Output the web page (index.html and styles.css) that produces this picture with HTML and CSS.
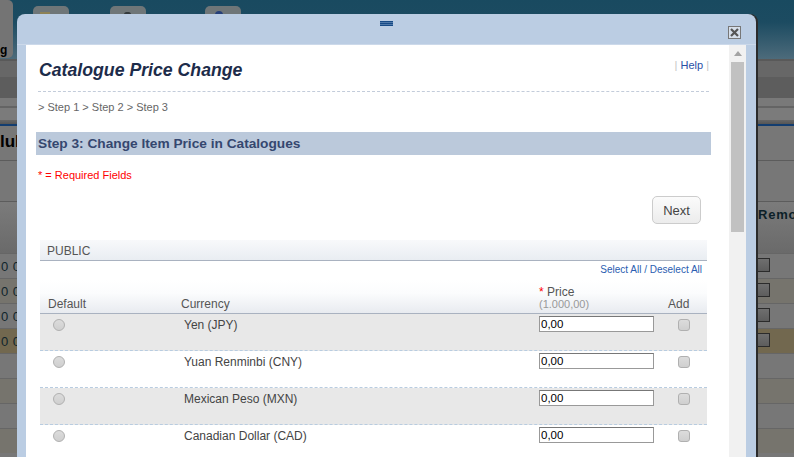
FILE: index.html
```html
<!DOCTYPE html>
<html lang="en">
<head>
<meta charset="utf-8">
<title>Catalogue Price Change</title>
<link rel="stylesheet" href="styles.css">
</head>
<body>
<div class="page">
  <div class="backdrop">
    <header class="bg-head">
      <div class="bg-side"><span>g</span></div>
      <div class="bg-tab bg-tab-a"><i></i></div>
      <div class="bg-tab bg-tab-b"><i></i></div>
      <div class="bg-tab bg-tab-c"><i></i></div>
    </header>
    <div class="bg-nav-a"></div>
    <div class="bg-nav-b"></div>
    <div class="bg-nav-c"></div>
    <div class="bg-nav-d"></div>
    <div class="bg-nav-e"></div>
    <div class="bg-title">lul</div>
    <div class="bg-blank"></div>
    <div class="bg-thead">Remo</div>
    <div class="bg-row bg-alt-a"><span>0 0</span><i></i></div>
    <div class="bg-row bg-alt-b"><span>0 0</span><i></i></div>
    <div class="bg-row bg-alt-a"><span>0 0</span><i></i></div>
    <div class="bg-row bg-hot"><span>0 0</span><i></i></div>
    <div class="bg-row bg-alt-a"></div>
    <div class="bg-row bg-alt-b"></div>
    <div class="bg-row bg-alt-a"></div>
    <div class="bg-row bg-alt-b"></div>
  </div>

  <section class="dialog">
    <div class="dialog-bar">
      <div class="grip"></div>
      <button class="close" aria-label="Close">
        <svg width="11" height="11" viewBox="0 0 11 11"><path d="M2 2l7 7M9 2l-7 7" stroke="#555" stroke-width="2.2" fill="none"/></svg>
      </button>
    </div>
    <div class="dialog-body">
      <main class="content">
        <div class="title-row">
          <h1>Catalogue Price Change</h1>
          <div class="help"><b>|</b> <a>Help</a> <b>|</b></div>
        </div>
        <div class="crumbs">&gt; Step 1 &gt; Step 2 &gt; Step 3</div>
        <h2>Step 3: Change Item Price in Catalogues</h2>
        <p class="required">* = Required Fields</p>
        <div class="actions"><button class="next">Next</button></div>
        <div class="panel">
          <div class="panel-head">PUBLIC</div>
          <div class="select-all"><a>Select All / Deselect All</a></div>
          <div class="grid grid-head">
            <div>Default</div>
            <div>Currency</div>
            <div class="price-head"><div><span class="star">*</span> Price</div><div class="hint">(1.000,00)</div></div>
            <div>Add</div>
          </div>
          <div class="grid row shaded">
            <div><input class="radio" type="radio"></div>
            <div class="cur">Yen (JPY)</div>
            <div><input class="price" type="text" value="0,00"></div>
            <div><input class="check" type="checkbox"></div>
          </div>
          <div class="grid row">
            <div><input class="radio" type="radio"></div>
            <div class="cur">Yuan Renminbi (CNY)</div>
            <div><input class="price" type="text" value="0,00"></div>
            <div><input class="check" type="checkbox"></div>
          </div>
          <div class="grid row shaded">
            <div><input class="radio" type="radio"></div>
            <div class="cur">Mexican Peso (MXN)</div>
            <div><input class="price" type="text" value="0,00"></div>
            <div><input class="check" type="checkbox"></div>
          </div>
          <div class="grid row">
            <div><input class="radio" type="radio"></div>
            <div class="cur">Canadian Dollar (CAD)</div>
            <div><input class="price" type="text" value="0,00"></div>
            <div><input class="check" type="checkbox"></div>
          </div>
        </div>
      </main>
      <aside class="scrollbar">
        <div class="arrow"></div>
        <div class="thumb"></div>
      </aside>
    </div>
  </section>
</div>
</body>
</html>
```
FILE: styles.css
```css
* { box-sizing: border-box; }
html, body { margin: 0; padding: 0; }
body { font-family: "Liberation Sans", Arial, sans-serif; background: #777; }
.page { position: relative; width: 794px; height: 457px; overflow: hidden; }

/* dimmed page behind the dialog */
.backdrop { display: flex; flex-direction: column; width: 794px; height: 457px; overflow: hidden; }
.bg-head { display: flex; height: 59px; background: linear-gradient(#194a60 0, #1c4b61 22px, #4d6b7b 59px); }
.bg-side { width: 13px; height: 58px; margin-right: 20px; background: #747474; border-radius: 0 5px 5px 0; font-weight: 700; font-size: 12px; color: #000; padding-top: 43px; line-height: 14px; }
.bg-tab { width: 36px; height: 20px; margin-top: 6px; padding-top: 6px; background: #6f7678; border-radius: 5px 5px 0 0; }
.bg-tab i { display: block; }
.bg-tab-a { margin-right: 41px; }
.bg-tab-a i { width: 10px; height: 4px; margin-left: 7px; background: #8d8256; }
.bg-tab-b { margin-right: 59px; }
.bg-tab-b i { width: 7px; height: 5px; margin-left: 14px; background: #333a3d; border-radius: 3px; }
.bg-tab-c i { width: 8px; height: 8px; margin: -1px 0 0 10px; background: #26407a; border-radius: 50%; }
.bg-nav-a { height: 18px; background: #676767; border-top: 2px solid #595959; }
.bg-nav-b { height: 21px; background: #5d5d5d; }
.bg-nav-c { height: 8px; background: #797979; }
.bg-nav-d { height: 14px; background: #7b7b7b; border-top: 2px solid #646464; }
.bg-nav-e { height: 6px; background: linear-gradient(#666 0, #555 4px, #123d70 4px); }
.bg-title { height: 34px; background: #777; font-size: 17px; font-weight: 700; color: #000; line-height: 32px; }
.bg-blank { height: 41px; background: #777; border-top: 1px solid #5c5c5c; }
.bg-thead { height: 52px; padding: 5px 0 0 758px; background: linear-gradient(#7b7b7b, #6a6a6a); border-top: 1px solid #5c5c5c; font-size: 13px; font-weight: 700; letter-spacing: .8px; line-height: 16px; color: #0c1f28; white-space: nowrap; }
.bg-row { display: flex; justify-content: space-between; align-items: center; height: 25px; padding: 0 24px 0 1px; border-top: 1px solid #666; font-size: 13px; letter-spacing: .5px; color: #10252c; }
.bg-row i { width: 14px; height: 14px; margin-top: -2px; background: linear-gradient(#6f6f6f, #5d5d5d); border: 1px solid #2b2b2b; }
.bg-alt-a { background: #777; }
.bg-alt-b { background: #76746d; }
.bg-hot { background: #72684f; }

/* dialog */
.dialog { position: absolute; left: 17px; top: 14px; width: 739px; height: 443px; display: flex; flex-direction: column; background: #bbcde3; border-radius: 8px 8px 0 0; box-shadow: 2px 0 0 #2b2b2b; }
.dialog-bar { display: flex; justify-content: space-between; height: 31px; padding: 7px 15px 0 363px; border-bottom: 1px solid rgba(255, 255, 255, .25); }
.grip { width: 13px; height: 5px; background: repeating-linear-gradient(#174a86 0, #174a86 1px, #4f78a8 1px, #4f78a8 2px); }
.close { width: 13px; height: 13px; margin-top: 5px; padding: 0; display: flex; align-items: center; justify-content: center; background: #d6dfea; border: 1px solid #777; }
.dialog-body { flex: 1; min-height: 0; display: flex; margin: 0 10px 0 9px; }
.content { width: 703px; height: 100%; overflow: hidden; background: #fff; padding: 0 18px 0 10px; }
.scrollbar { width: 17px; background: #f1f1f1; padding: 0 2px; }
.arrow { width: 0; height: 0; margin: 6px auto 0; border-left: 4px solid transparent; border-right: 4px solid transparent; border-bottom: 5px solid #a3a3a3; }
.thumb { height: 170px; margin-top: 6px; background: #c1c1c1; }

.title-row { display: flex; justify-content: space-between; height: 47px; border-bottom: 1px dashed #c3ccda; margin: 0 2px; }
h1 { margin: 14px 0 0 1px; font-size: 17.7px; line-height: 22px; font-style: italic; font-weight: 700; color: #1d2c4a; }
.help { margin-top: 14px; font-size: 11px; line-height: 13px; color: #2a4fa5; }
.help b { font-weight: 400; color: #c5c5c5; }
.crumbs { margin: 9px 2px 0; font-size: 11px; line-height: 13px; color: #666; }
h2 { margin: 18px 0 0; padding-left: 2px; height: 23px; width: 675px; background: #bbc9db; font-size: 13.7px; line-height: 24px; font-weight: 700; color: #35476f; }
.required { margin: 14px 2px 0; font-size: 11px; line-height: 13px; color: #f00; }
.actions { display: flex; justify-content: flex-end; height: 28px; margin-top: 14px; padding-right: 10px; }
.next { width: 49px; height: 28px; padding: 0; border: 1px solid #ccc; border-radius: 5px; background: linear-gradient(#fbfbfb, #ececec); font-family: inherit; font-size: 13px; color: #444; }
.panel { width: 667px; margin: 16px 0 0 4px; }
.panel-head { height: 21px; padding-left: 7px; background: linear-gradient(#f8f9fb, #e9edf2); border-bottom: 1px solid #a9b2c0; font-size: 12px; line-height: 22px; color: #555; }
.select-all { height: 19px; padding-right: 5px; text-align: right; font-size: 10px; line-height: 18px; color: #2a5db0; }
.grid { display: grid; grid-template-columns: 141px 358px 129px 39px; }
.grid-head { height: 34px; padding-top: 4px; background: linear-gradient(#fff, #fbfcfd 40%, #e8ebf0); border-bottom: 1px solid #a9b2c0; font-size: 12px; color: #555; align-items: end; }
.grid-head > div { line-height: 13px; padding-bottom: 2px; }
.grid-head > div:first-child { padding-left: 8px; }
.grid-head > .price-head { line-height: 12px; padding-bottom: 3px; }
.hint { color: #999; font-size: 11px; }
.star { color: #f00; }
.row { height: 37px; border-bottom: 1px dashed #b8cce0; font-size: 12px; color: #444; }
.cur { padding: 4px 0 0 3px; line-height: 14px; }
.shaded { background: #e8e8e8; }
.radio, .check { appearance: none; display: block; width: 12px; height: 12px; margin: 5px 0 0 13px; background: linear-gradient(#dcdcdc, #cfcfcf); border: 1px solid #b0b0b0; }
.radio { border-radius: 50%; }
.check { border-radius: 3px; margin-left: 10px; }
.price { display: block; width: 115px; height: 16px; margin-top: 2px; padding: 0 1px; border: 1px solid #999; border-top-color: #777; background: #fff; font-family: inherit; font-size: 11.5px; color: #000; }
```
